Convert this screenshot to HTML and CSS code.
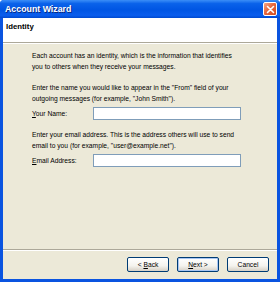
FILE: index.html
```html
<!DOCTYPE html>
<html lang="en">
<head>
    <meta charset="UTF-8">
    <title>Account Wizard</title>
    <link rel="stylesheet" href="styles.css">
</head>
<body>
    <div class="window">
        <!-- Title bar -->
        <div class="titlebar">
            <span class="title">Account Wizard</span>
            <button class="close-btn" aria-label="Close">
                <svg width="9" height="9" viewBox="0 0 9 9">
                    <path d="M1.5 1.5 L7.5 7.5 M7.5 1.5 L1.5 7.5" stroke="#fff" stroke-width="1.6" stroke-linecap="round"/>
                </svg>
            </button>
        </div>

        <div class="content">
            <!-- Page header -->
            <div class="page-header">
                <h1 class="page-title">Identity</h1>
            </div>

            <!-- Page body -->
            <div class="page-body">
                <p class="text">Each account has an identity, which is the information that identifies you to others when they receive your messages.</p>

                <p class="text">Enter the name you would like to appear in the "From" field of your outgoing messages (for example, "John Smith").</p>
                <div class="field">
                    <label class="field-label"><u>Y</u>our Name:</label>
                    <input class="field-input" type="text">
                </div>

                <p class="text">Enter your email address. This is the address others will use to send email to you (for example, "user@example.net").</p>
                <div class="field">
                    <label class="field-label"><u>E</u>mail Address:</label>
                    <input class="field-input" type="text">
                </div>
            </div>

            <!-- Buttons -->
            <div class="page-footer">
                <button class="btn">&lt; <u>B</u>ack</button>
                <button class="btn btn-default"><u>N</u>ext &gt;</button>
                <button class="btn">Cancel</button>
            </div>
        </div>
    </div>
</body>
</html>
```

FILE: styles.css
```css
body {
    margin: 0;
    padding: 0;
    font-family: 'Liberation Sans', Arial, sans-serif;
}

.window {
    width: 280px;
    height: 282px;
    box-sizing: border-box;
    display: flex;
    flex-direction: column;
    background: #0a54e0;
    padding: 0 3px 3px 3px;
    border-radius: 4px 4px 0 0;
}

.titlebar {
    height: 18px;
    margin: 0 -3px;
    padding: 0 3px 0 5px;
    display: flex;
    align-items: center;
    justify-content: space-between;
    background: linear-gradient(to bottom, #3b8ef7 0%, #0a62ea 20%, #0055e3 55%, #0a5ded 85%, #0049cf 100%);
    border-radius: 4px 4px 0 0;
}

.title {
    color: #fff;
    font-size: 8.8px;
    font-weight: bold;
    text-shadow: 1px 1px 0 #0a2a80;
}

.close-btn {
    width: 14px;
    height: 14px;
    padding: 0;
    border: 1px solid #fff;
    border-radius: 2px;
    background: linear-gradient(135deg, #f6a889 0%, #e8683e 45%, #d04a1e 100%);
    display: flex;
    align-items: center;
    justify-content: center;
}

.content {
    flex: 1;
    display: flex;
    flex-direction: column;
    background: #ece9d8;
}

.page-header {
    height: 25px;
    background: #fff;
    border-bottom: 1px solid #aca899;
    box-shadow: 0 1px 0 #fff;
    padding: 4px 0 0 3px;
    box-sizing: border-box;
}

.page-title {
    margin: 0;
    font-size: 7.8px;
    font-weight: bold;
    color: #000;
}

.page-body {
    flex: 1;
    padding: 7px 0 0 29px;
}

.text {
    margin: 0 0 10px 0;
    width: 208px;
    font-size: 6.7px;
    line-height: 11px;
    color: #000;
}

.field {
    display: flex;
    align-items: center;
    margin: -7px 0 9px 0;
}

.field-label {
    width: 61px;
    font-size: 6.7px;
    color: #000;
}

.field-input {
    width: 148px;
    height: 13px;
    box-sizing: border-box;
    border: 1px solid #7f9db9;
    background: #fff;
    padding: 0;
}

.page-footer {
    height: 29px;
    border-top: 1px solid #aca899;
    box-shadow: inset 0 1px 0 #fff;
    display: flex;
    justify-content: flex-end;
    align-items: center;
    gap: 8px;
    padding: 0 8px 0 0;
}

.btn {
    width: 42px;
    height: 15px;
    padding: 0;
    border: 1px solid #003c74;
    border-radius: 2px;
    background: linear-gradient(to bottom, #ffffff 0%, #f4f3ee 60%, #d6d0c5 100%);
    font-family: 'Liberation Sans', Arial, sans-serif;
    font-size: 6.7px;
    color: #000;
}

.btn-default {
    box-shadow: inset 0 0 0 1px #a8c6f3;
}
```
